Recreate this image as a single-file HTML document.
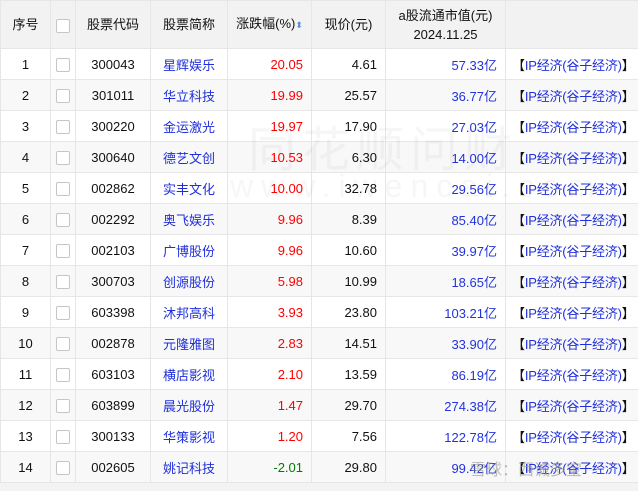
<!DOCTYPE html>
<html><head><meta charset="utf-8"><style>
*{margin:0;padding:0;box-sizing:border-box}
body{width:638px;height:491px;overflow:hidden;background:#f3f3f3;font-family:"Liberation Sans","Noto Sans CJK SC",sans-serif;font-size:13px;color:#111;position:relative}
table{border-collapse:collapse;table-layout:fixed;width:638px;position:absolute;left:0;top:0}
td,th{border:1px solid #e6e6e6;height:31px;white-space:nowrap;overflow:hidden;font-weight:normal}
th{background:#f2f2f2;height:48px;font-size:13px;line-height:19px}
tr.e td{background:#f8f8f8}
tr.o td{background:#fff}
.c{text-align:center}.r{text-align:right;padding-right:8px}
.n{color:#1f2fdc}.red{color:#f00}.grn{color:#007a00}.b{color:#2233dd}
.cb{display:inline-block;width:14px;height:14px;border:1px solid #c6c6c6;background:#fff;border-radius:2px;vertical-align:middle}
.cp{color:#1f2fdc;padding-left:6px;letter-spacing:-0.2px}
.cp b{color:#111;font-weight:normal}
.wm{position:absolute;color:rgba(0,0,0,0.035);font-size:48px;left:248px;top:110px;letter-spacing:6px}
.wm2{position:absolute;color:rgba(0,0,0,0.035);font-size:32px;left:230px;top:168px;letter-spacing:8px}
.xq{position:absolute;left:470px;top:456px;color:rgba(150,150,150,0.6);font-size:16px}
</style></head><body>
<table>
<colgroup><col style="width:50px"><col style="width:25px"><col style="width:75px"><col style="width:77px"><col style="width:84px"><col style="width:74px"><col style="width:120px"><col style="width:133px"></colgroup>
<tr><th>序号</th><th><span class="cb"></span></th><th>股票代码</th><th>股票简称</th><th>涨跌幅(%)<span style="color:#5b8fd6;font-size:9px">⬍</span></th><th>现价(元)</th><th>a股流通市值(元)<br>2024.11.25</th><th></th></tr>
<tr class="o"><td class="c">1</td><td class="c"><span class="cb"></span></td><td class="c">300043</td><td class="c n">星辉娱乐</td><td class="r red">20.05</td><td class="r">4.61</td><td class="r b">57.33亿</td><td class="cp"><b>【</b>IP经济(谷子经济)<b>】</b></td></tr>
<tr class="e"><td class="c">2</td><td class="c"><span class="cb"></span></td><td class="c">301011</td><td class="c n">华立科技</td><td class="r red">19.99</td><td class="r">25.57</td><td class="r b">36.77亿</td><td class="cp"><b>【</b>IP经济(谷子经济)<b>】</b></td></tr>
<tr class="o"><td class="c">3</td><td class="c"><span class="cb"></span></td><td class="c">300220</td><td class="c n">金运激光</td><td class="r red">19.97</td><td class="r">17.90</td><td class="r b">27.03亿</td><td class="cp"><b>【</b>IP经济(谷子经济)<b>】</b></td></tr>
<tr class="e"><td class="c">4</td><td class="c"><span class="cb"></span></td><td class="c">300640</td><td class="c n">德艺文创</td><td class="r red">10.53</td><td class="r">6.30</td><td class="r b">14.00亿</td><td class="cp"><b>【</b>IP经济(谷子经济)<b>】</b></td></tr>
<tr class="o"><td class="c">5</td><td class="c"><span class="cb"></span></td><td class="c">002862</td><td class="c n">实丰文化</td><td class="r red">10.00</td><td class="r">32.78</td><td class="r b">29.56亿</td><td class="cp"><b>【</b>IP经济(谷子经济)<b>】</b></td></tr>
<tr class="e"><td class="c">6</td><td class="c"><span class="cb"></span></td><td class="c">002292</td><td class="c n">奥飞娱乐</td><td class="r red">9.96</td><td class="r">8.39</td><td class="r b">85.40亿</td><td class="cp"><b>【</b>IP经济(谷子经济)<b>】</b></td></tr>
<tr class="o"><td class="c">7</td><td class="c"><span class="cb"></span></td><td class="c">002103</td><td class="c n">广博股份</td><td class="r red">9.96</td><td class="r">10.60</td><td class="r b">39.97亿</td><td class="cp"><b>【</b>IP经济(谷子经济)<b>】</b></td></tr>
<tr class="e"><td class="c">8</td><td class="c"><span class="cb"></span></td><td class="c">300703</td><td class="c n">创源股份</td><td class="r red">5.98</td><td class="r">10.99</td><td class="r b">18.65亿</td><td class="cp"><b>【</b>IP经济(谷子经济)<b>】</b></td></tr>
<tr class="o"><td class="c">9</td><td class="c"><span class="cb"></span></td><td class="c">603398</td><td class="c n">沐邦高科</td><td class="r red">3.93</td><td class="r">23.80</td><td class="r b">103.21亿</td><td class="cp"><b>【</b>IP经济(谷子经济)<b>】</b></td></tr>
<tr class="e"><td class="c">10</td><td class="c"><span class="cb"></span></td><td class="c">002878</td><td class="c n">元隆雅图</td><td class="r red">2.83</td><td class="r">14.51</td><td class="r b">33.90亿</td><td class="cp"><b>【</b>IP经济(谷子经济)<b>】</b></td></tr>
<tr class="o"><td class="c">11</td><td class="c"><span class="cb"></span></td><td class="c">603103</td><td class="c n">横店影视</td><td class="r red">2.10</td><td class="r">13.59</td><td class="r b">86.19亿</td><td class="cp"><b>【</b>IP经济(谷子经济)<b>】</b></td></tr>
<tr class="e"><td class="c">12</td><td class="c"><span class="cb"></span></td><td class="c">603899</td><td class="c n">晨光股份</td><td class="r red">1.47</td><td class="r">29.70</td><td class="r b">274.38亿</td><td class="cp"><b>【</b>IP经济(谷子经济)<b>】</b></td></tr>
<tr class="o"><td class="c">13</td><td class="c"><span class="cb"></span></td><td class="c">300133</td><td class="c n">华策影视</td><td class="r red">1.20</td><td class="r">7.56</td><td class="r b">122.78亿</td><td class="cp"><b>【</b>IP经济(谷子经济)<b>】</b></td></tr>
<tr class="e"><td class="c">14</td><td class="c"><span class="cb"></span></td><td class="c">002605</td><td class="c n">姚记科技</td><td class="r grn">-2.01</td><td class="r">29.80</td><td class="r b">99.42亿</td><td class="cp"><b>【</b>IP经济(谷子经济)<b>】</b></td></tr>
</table>
<div class="wm">同花顺问财</div>
<div class="wm2">www.iwencai.com</div>
<div class="xq">雪球：西诚多宝</div>
</body></html>
